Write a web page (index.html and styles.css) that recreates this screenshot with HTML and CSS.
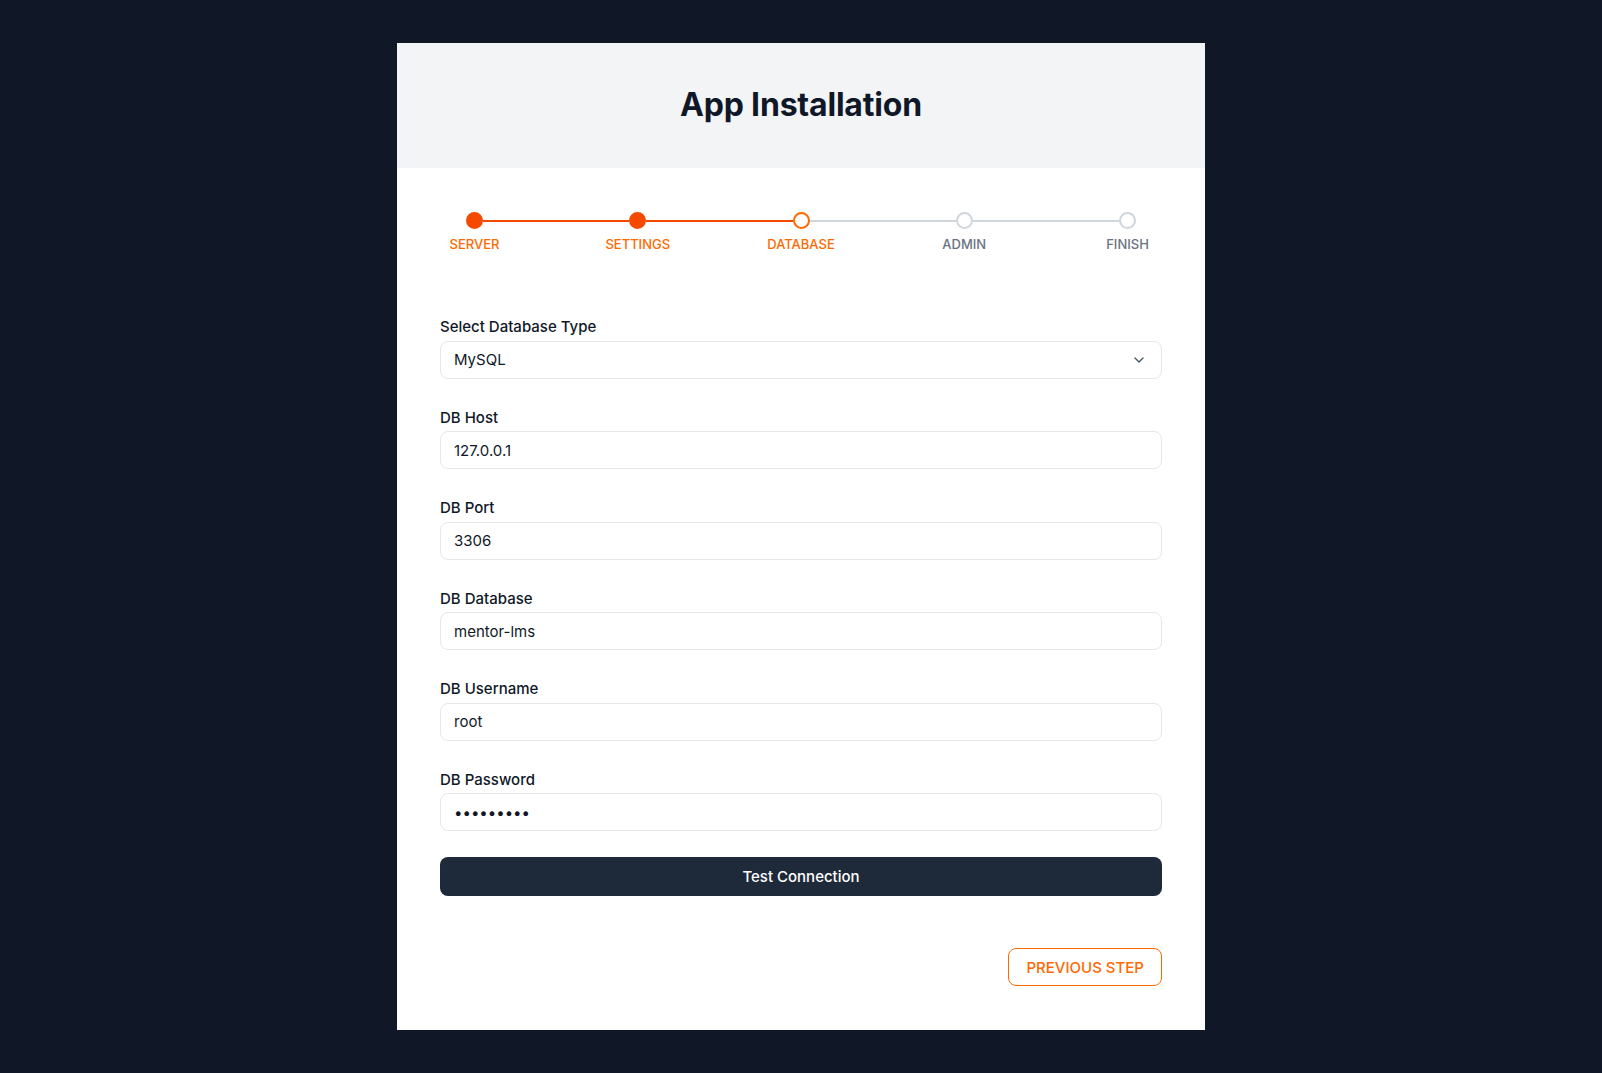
FILE: index.html
```html
<!DOCTYPE html>
<html lang="en">
<head>
<meta charset="utf-8">
<title>App Installation</title>
<link rel="stylesheet" href="styles.css">
</head>
<body>
<main class="card">
  <header class="card-header">
    <h1 class="title">App Installation</h1>
  </header>
  <section class="card-body">
    <div class="stepper">
      <div class="track">
        <span class="dot dot-done"></span>
        <span class="bar bar-done"></span>
        <span class="dot dot-done"></span>
        <span class="bar bar-done"></span>
        <span class="dot dot-current"></span>
        <span class="bar"></span>
        <span class="dot"></span>
        <span class="bar"></span>
        <span class="dot"></span>
      </div>
      <div class="labels">
        <span class="lbl lbl-active"><span>SERVER</span></span>
        <span class="lbl lbl-active"><span>SETTINGS</span></span>
        <span class="lbl lbl-active"><span>DATABASE</span></span>
        <span class="lbl"><span>ADMIN</span></span>
        <span class="lbl"><span>FINISH</span></span>
      </div>
    </div>

    <form class="form">
      <div class="field">
        <label class="label" for="dbtype">Select Database Type</label>
        <div class="select-wrap">
          <select id="dbtype" class="control select">
            <option>MySQL</option>
            <option>PostgreSQL</option>
            <option>SQLite</option>
          </select>
          <svg class="chevron" width="10" height="6" viewBox="0 0 10 6" aria-hidden="true">
            <path d="M1 1l4 4 4-4" fill="none" stroke="#4a5565" stroke-width="1.4" stroke-linecap="round" stroke-linejoin="round"/>
          </svg>
        </div>
      </div>
      <div class="field">
        <label class="label" for="host">DB Host</label>
        <input id="host" class="control" type="text" value="127.0.0.1">
      </div>
      <div class="field">
        <label class="label" for="port">DB Port</label>
        <input id="port" class="control" type="text" value="3306">
      </div>
      <div class="field">
        <label class="label" for="dbname">DB Database</label>
        <input id="dbname" class="control" type="text" value="mentor-lms">
      </div>
      <div class="field">
        <label class="label" for="user">DB Username</label>
        <input id="user" class="control" type="text" value="root">
      </div>
      <div class="field">
        <label class="label" for="pass">DB Password</label>
        <input id="pass" class="control" type="password" value="password1">
      </div>
      <button type="button" class="btn-test">Test Connection</button>
      <div class="footer">
        <button type="button" class="btn-prev">PREVIOUS STEP</button>
      </div>
    </form>
  </section>
</main>
</body>
</html>
```

FILE: styles.css
```css
* { box-sizing: border-box; }

html, body { margin: 0; }

body {
  background: #101828;
  font-family: Inter, "Noto Sans", "Liberation Sans", sans-serif;
  color: #101828;
  padding: 43px 0 42px;
}

.card {
  width: 808px;
  margin: 0 auto;
  background: #ffffff;
}

.card-header {
  height: 125px;
  background: #f3f4f6;
  display: flex;
  align-items: center;
  justify-content: center;
}

.title {
  margin: 0;
  font-size: 32px;
  line-height: 40px;
  font-weight: 700;
  color: #101828;
  letter-spacing: -0.2px;
  position: relative;
  top: -1px;
}

.card-body {
  padding: 44px 43px 44px;
}

/* Stepper */
.stepper {
  margin: 0 26px;
}

.track {
  display: flex;
  align-items: center;
}

.dot {
  width: 17px;
  height: 17px;
  border-radius: 50%;
  border: 2px solid #d1d5dc;
  background: #ffffff;
  flex: none;
}

.dot-done {
  background: #f54900;
  border-color: #f54900;
}

.dot-current {
  border-color: #ff6900;
}

.bar {
  flex: 1;
  height: 2px;
  background: #d1d5dc;
}

.bar-done {
  background: #f54900;
}

.labels {
  display: flex;
  justify-content: space-between;
  margin-top: 5px;
}

.lbl {
  width: 17px;
  display: flex;
  justify-content: center;
  white-space: nowrap;
  font-size: 13px;
  line-height: 20px;
  font-weight: 500;
  color: #6a7282;
}

.lbl-active {
  color: #ff6900;
}

/* Form */
.form {
  margin-top: 63px;
  display: flex;
  flex-direction: column;
}

.field {
  display: flex;
  flex-direction: column;
}

.field + .field {
  margin-top: 29px;
}

.label {
  font-size: 15px;
  line-height: 20px;
  font-weight: 500;
  color: #101828;
  margin-bottom: 3.5px;
}

.control {
  width: 100%;
  height: 38px;
  border: 1px solid #e5e7eb;
  border-radius: 8px;
  padding: 0 13px;
  font-family: inherit;
  font-size: 15px;
  color: #101828;
  background: #ffffff;
  outline: none;
}

.select-wrap {
  position: relative;
}

.select {
  appearance: none;
  -webkit-appearance: none;
  padding-right: 40px;
}

.chevron {
  position: absolute;
  right: 18px;
  top: 16px;
  pointer-events: none;
}

.btn-test {
  margin-top: 26px;
  height: 39px;
  width: 100%;
  border: none;
  border-radius: 8px;
  background: #1e2939;
  color: #ffffff;
  font-family: inherit;
  font-size: 15px;
  font-weight: 500;
  cursor: pointer;
}

.footer {
  margin-top: 52px;
  display: flex;
  justify-content: flex-end;
}

.btn-prev {
  height: 38px;
  padding: 0 17px;
  border: 1px solid #ff6900;
  border-radius: 8px;
  background: #ffffff;
  color: #ff6900;
  font-family: inherit;
  font-size: 15px;
  font-weight: 500;
  cursor: pointer;
}
```
